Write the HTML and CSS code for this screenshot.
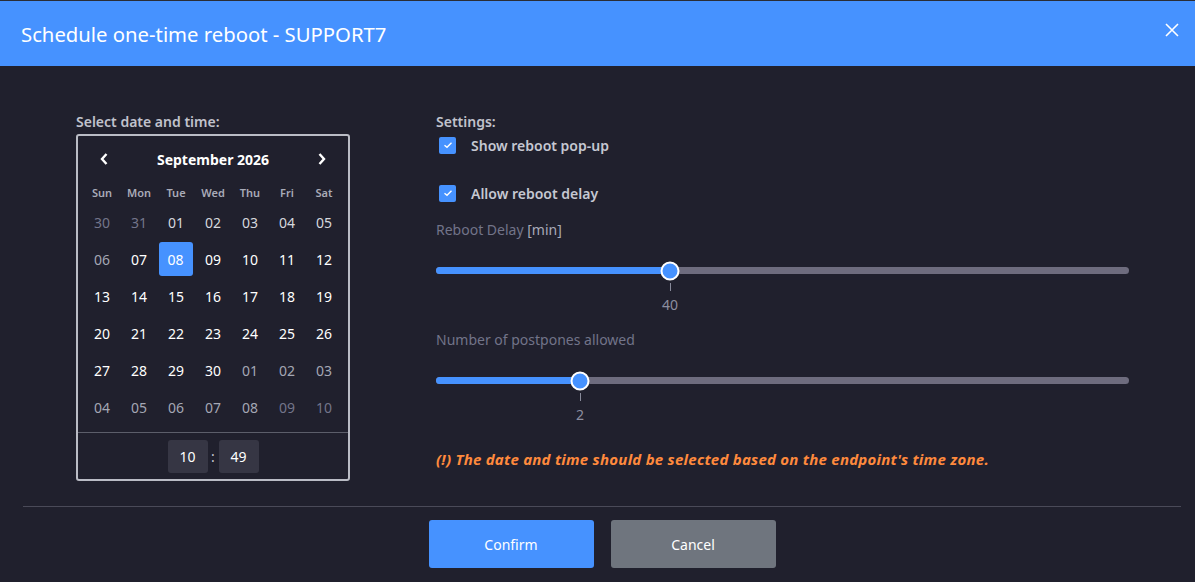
FILE: index.html
```html
<html>
    <head>
        <link rel="stylesheet" href="styles.css">
    </head>
    <body>
        <div class="dialog">
            <header class="dlg-head">
                <h1>Schedule one-time reboot - SUPPORT7</h1>
                <button class="close" type="button" aria-label="Close">
                    <svg width="14" height="14" viewBox="0 0 14 14"><path d="M1 1L13 13M13 1L1 13" stroke="#fff" stroke-width="1.6" fill="none"/></svg>
                </button>
            </header>

            <main class="dlg-body">
                <section class="left">
                    <p class="label">Select date and time:</p>
                    <div class="calendar">
                        <div class="cal-nav">
                            <span class="arrow">
                                <svg width="10" height="14" viewBox="0 0 10 14"><path d="M7.5 2L3 7l4.5 5" stroke="#fff" stroke-width="2.4" fill="none"/></svg>
                            </span>
                            <span class="month">September 2026</span>
                            <span class="arrow">
                                <svg width="10" height="14" viewBox="0 0 10 14"><path d="M2.5 2L7 7l-4.5 5" stroke="#fff" stroke-width="2.4" fill="none"/></svg>
                            </span>
                        </div>
                        <div class="days">
                            <span class="wd">Sun</span><span class="wd">Mon</span><span class="wd">Tue</span><span class="wd">Wed</span><span class="wd">Thu</span><span class="wd">Fri</span><span class="wd">Sat</span>

                            <span class="d off">30</span><span class="d off">31</span><span class="d past">01</span><span class="d past">02</span><span class="d past">03</span><span class="d past">04</span><span class="d past">05</span>
                            <span class="d next">06</span><span class="d">07</span><span class="d sel">08</span><span class="d">09</span><span class="d">10</span><span class="d">11</span><span class="d">12</span>
                            <span class="d">13</span><span class="d">14</span><span class="d">15</span><span class="d">16</span><span class="d">17</span><span class="d">18</span><span class="d">19</span>
                            <span class="d">20</span><span class="d">21</span><span class="d">22</span><span class="d">23</span><span class="d">24</span><span class="d">25</span><span class="d">26</span>
                            <span class="d">27</span><span class="d">28</span><span class="d">29</span><span class="d">30</span><span class="d next">01</span><span class="d next">02</span><span class="d next">03</span>
                            <span class="d next">04</span><span class="d next">05</span><span class="d next">06</span><span class="d next">07</span><span class="d next">08</span><span class="d off">09</span><span class="d off">10</span>
                        </div>
                        <div class="cal-time">
                            <span class="tbox">10</span>
                            <span class="colon">:</span>
                            <span class="tbox">49</span>
                        </div>
                    </div>
                </section>

                <section class="right">
                    <p class="label">Settings:</p>
                    <label class="check"><span class="box"><svg width="10" height="8" viewBox="0 0 10 8"><path d="M1.5 4.2L4 6.3 8.5 1.8" stroke="#fff" stroke-width="1.4" fill="none"/></svg></span>Show reboot pop-up</label>
                    <label class="check"><span class="box"><svg width="10" height="8" viewBox="0 0 10 8"><path d="M1.5 4.2L4 6.3 8.5 1.8" stroke="#fff" stroke-width="1.4" fill="none"/></svg></span>Allow reboot delay</label>

                    <p class="field">Reboot Delay <span class="unit">[min]</span></p>
                    <!-- delay: 0..120 min, value 40 -->
                    <div class="slider">
                        <div class="track"><div class="fill" style="width: calc(9px + 33.333% - 6px)"></div></div>
                        <div class="rail">
                            <span class="thumb" style="left: 33.333%"></span>
                            <div class="mark" style="left: 33.333%"><i></i><b>40</b></div>
                        </div>
                    </div>

                    <p class="field">Number of postpones allowed</p>
                    <!-- postpones: 0..10, value 2 -->
                    <div class="slider">
                        <div class="track"><div class="fill" style="width: calc(9px + 20% - 3.6px)"></div></div>
                        <div class="rail">
                            <span class="thumb" style="left: 20%"></span>
                            <div class="mark" style="left: 20%"><i></i><b>2</b></div>
                        </div>
                    </div>

                    <p class="warn">(!) The date and time should be selected based on the endpoint's time zone.</p>
                </section>
            </main>

            <footer class="dlg-foot">
                <button class="btn confirm" type="button">Confirm</button>
                <button class="btn cancel" type="button">Cancel</button>
            </footer>
        </div>
    </body>
</html>
```

FILE: styles.css
```css
body {
    margin: 0;
    font-family: "Noto Sans", "Open Sans", sans-serif;
    background-color: #20202d;
    color: #c6c8d2;
}

.dialog {
    width: 1195px;
    height: 582px;
    display: flex;
    flex-direction: column;
    overflow: hidden;
}

/* title bar */
.dlg-head {
    flex-shrink: 0;
    height: 65px;
    border-top: 1px solid #2a2d36;
    background-color: #4692ff;
    display: flex;
    align-items: center;
    justify-content: space-between;
    padding: 0 15px 0 21px;
}
.dlg-head h1 {
    margin: 0;
    font-size: 20.3px;
    font-weight: 400;
    color: #fff;
}
.close {
    background: none;
    border: 0;
    padding: 0;
    width: 16px;
    height: 16px;
    display: flex;
    align-items: center;
    justify-content: center;
    margin-bottom: 7px;
}

.dlg-body {
    flex: 1;
    min-height: 0;
    display: flex;
    padding: 0 0 0 76px;
}
.label {
    margin: 0;
    font-size: 14px;
    font-weight: 600;
    color: #c0c2cc;
    line-height: 20px;
}

/* calendar */
.left {
    width: 274px;
    padding-top: 46px;
}
.left .label {
    margin-bottom: 2px;
}
.calendar {
    border: 2px solid #babcc5;
    border-radius: 3px;
}
.cal-nav {
    height: 46px;
    display: flex;
    align-items: center;
    justify-content: space-between;
    padding: 0 21px 0 21px;
}
.arrow {
    display: flex;
}
.month {
    font-size: 14px;
    font-weight: 700;
    color: #fff;
}
.days {
    display: grid;
    grid-template-columns: repeat(7, 37px);
    grid-template-rows: 22px;
    grid-auto-rows: 37px;
    justify-content: center;
    padding-bottom: 6px;
    border-bottom: 1px solid #5c5e6a;
}
.wd {
    font-size: 11px;
    font-weight: 600;
    color: #a9abb8;
    text-align: center;
    line-height: 22px;
}
.d {
    font-size: 14px;
    color: #fff;
    display: flex;
    align-items: center;
    justify-content: center;
}
.d.past { color: #d6d8de; }
.d.next { color: #a4a7b4; }
.d.off { color: #73758a; }
.d.sel {
    background-color: #4692ff;
    border-radius: 3px;
    margin: 1px 2px 2px 1px;
}
.cal-time {
    display: flex;
    justify-content: center;
    align-items: center;
    gap: 2px;
    padding: 7px 0 6px 0;
}
.tbox {
    width: 40px;
    height: 33px;
    background-color: #363644;
    border-radius: 3px;
    display: flex;
    align-items: center;
    justify-content: center;
    font-size: 14px;
    color: #fff;
}
.colon {
    width: 7px;
    text-align: center;
    font-size: 14px;
    color: #c6c8d2;
}

/* settings column */
.right {
    margin-left: 86px;
    width: 693px;
    padding-top: 46px;
}
.check {
    display: flex;
    align-items: center;
    height: 20px;
    margin-top: 3px;
    margin-bottom: 28px;
    font-size: 14px;
    font-weight: 600;
    color: #c6c8d2;
}
.check:last-of-type {
    margin-bottom: 0;
}
.box {
    width: 17px;
    height: 17px;
    margin: 0 15px 0 3px;
    background-color: #4692ff;
    border-radius: 2px;
    display: flex;
    align-items: center;
    justify-content: center;
}
.field {
    margin: 17px 0 0 0;
    font-size: 14px;
    line-height: 20px;
    color: #727489;
}
.slider + .field {
    margin-top: 0;
}
.unit { color: #a8aab8; }

/* sliders: the thumb runs on a rail inset by its radius */
.slider {
    position: relative;
    height: 90px;
    padding-top: 27px;
    box-sizing: border-box;
}
.track {
    height: 7px;
    border-radius: 4px;
    background-color: #6e6c7e;
}
.fill {
    height: 100%;
    border-radius: 4px;
    background-color: #4692ff;
}
.rail {
    position: absolute;
    left: 9px;
    right: 9px;
    top: 0;
    bottom: 0;
}
.thumb {
    position: absolute;
    top: 30.5px;
    width: 15px;
    height: 15px;
    border: 2px solid #fff;
    border-radius: 50%;
    background-color: #4692ff;
    transform: translate(-50%, -50%);
}
.mark {
    position: absolute;
    top: 43px;
    display: flex;
    flex-direction: column;
    align-items: center;
    transform: translateX(-50%);
}
.mark i {
    width: 1px;
    height: 8px;
    background-color: #8a8c9c;
}
.mark b {
    margin-top: 4px;
    font-size: 14px;
    font-weight: 400;
    line-height: 20px;
    color: #8c8ea0;
}

.warn {
    margin: 9px 0 0 0;
    font-size: 15px;
    letter-spacing: 0.25px;
    font-weight: 700;
    font-style: italic;
    line-height: 20px;
    color: #ff8a3d;
}

/* buttons */
.dlg-foot {
    flex-shrink: 0;
    margin: 0 14px 0 23px;
    border-top: 1px solid #4a4a58;
    height: 76px;
    display: flex;
    justify-content: center;
    gap: 17px;
    padding-top: 13px;
    box-sizing: border-box;
}
.btn {
    width: 165px;
    height: 48px;
    border: 0;
    border-radius: 3px;
    font-family: "Noto Sans", "Open Sans", sans-serif;
    font-size: 14px;
    color: #fff;
}
.confirm { background-color: #4692ff; }
.cancel { background-color: #6f757e; }
```
